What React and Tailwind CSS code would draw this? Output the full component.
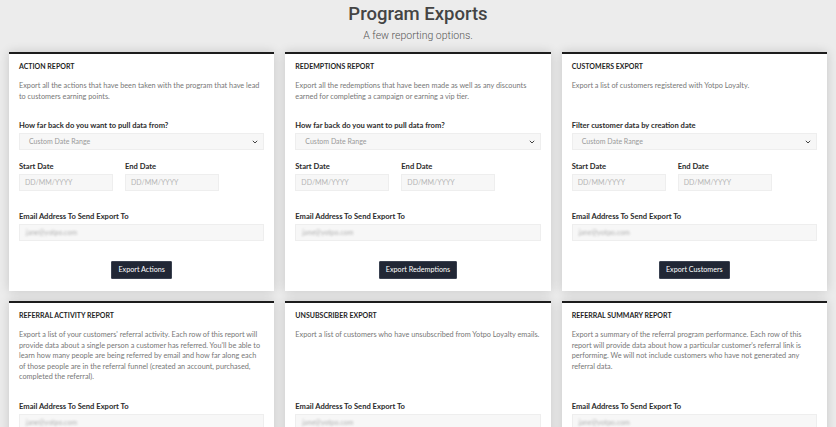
import React from 'react';

const reports = [
  {
    title: 'Action Report',
    desc: 'Export all the actions that have been taken with the program that have lead to customers earning points.',
    filterLabel: 'How far back do you want to pull data from?',
    button: 'Export Actions',
  },
  {
    title: 'Redemptions Report',
    desc: 'Export all the redemptions that have been made as well as any discounts earned for completing a campaign or earning a vip tier.',
    filterLabel: 'How far back do you want to pull data from?',
    button: 'Export Redemptions',
  },
  {
    title: 'Customers Export',
    desc: 'Export a list of customers registered with Yotpo Loyalty.',
    filterLabel: 'Filter customer data by creation date',
    button: 'Export Customers',
  },
  {
    title: 'Referral Activity Report',
    desc: "Export a list of your customers' referral activity. Each row of this report will provide data about a single person a customer has referred. You'll be able to learn how many people are being referred by email and how far along each of those people are in the referral funnel (created an account, purchased, completed the referral).",
    button: 'Export Referrals',
  },
  {
    title: 'Unsubscriber Export',
    desc: 'Export a list of customers who have unsubscribed from Yotpo Loyalty emails.',
    button: 'Export Unsubscribers',
  },
  {
    title: 'Referral Summary Report',
    desc: "Export a summary of the referral program performance. Each row of this report will provide data about how a particular customer's referral link is performing. We will not include customers who have not generated any referral data.",
    button: 'Export Summary',
  },
];

function Label({ children, className = '' }) {
  return (
    <div className={`text-[7.6px] leading-[10px] font-bold text-[#2b2b2b] ${className}`}>{children}</div>
  );
}

function ReportCard({ report }) {
  return (
    <div className="flex flex-col bg-white border-t-2 border-[#1c1c1c] shadow-[0_0_10px_rgba(0,0,0,0.16)] px-[10px] pt-[7px] pb-[12px]">
      <div className="text-[7px] leading-[10px] font-bold uppercase text-[#1f1f1f]">{report.title}</div>
      <p className="flex-1 mt-[10px] mb-[18px] text-[7.3px] leading-[10.5px] text-[#777]">{report.desc}</p>

      {report.filterLabel && (
        <>
          <Label>{report.filterLabel}</Label>
          <div className="mt-[3px] h-[17px] flex items-center justify-between bg-[#f7f7f7] border border-[#eeeeee] pl-[9px] pr-[5px] text-[7px] text-[#999]">
            <span>Custom Date Range</span>
            <svg width="6" height="4" viewBox="0 0 6 4" fill="none">
              <path d="M0.8 0.8 L3 3 L5.2 0.8" stroke="#444" strokeWidth="1" />
            </svg>
          </div>
          <div className="mt-[11px] flex gap-[12px]">
            {['Start Date', 'End Date'].map((l) => (
              <div key={l} className="w-[94px]">
                <Label>{l}</Label>
                <div className="mt-[3px] h-[17px] flex items-center bg-[#f7f7f7] border border-[#eeeeee] pl-[5px] text-[7px] text-[#b5b5b5]">
                  DD/MM/YYYY
                </div>
              </div>
            ))}
          </div>
        </>
      )}

      <Label className={report.filterLabel ? 'mt-[20px]' : ''}>Email Address To Send Export To</Label>
      <div className="mt-[3px] h-[17px] flex items-center bg-[#f7f7f7] border border-[#eeeeee] pl-[6px]">
        <span className="text-[7px] text-[#b0b0b0] blur-[1.2px]">jane@yotpo.com</span>
      </div>

      <div className="mt-[20px] flex justify-center">
        <button className="h-[18px] px-[6px] bg-[#212735] border border-[#3a4150] rounded-[1px] text-[7.2px] text-white">
          {report.button}
        </button>
      </div>
    </div>
  );
}

export default function App() {
  return (
    <div className="min-h-screen bg-[#ececec] font-['Lato',sans-serif]">
      <div className="pt-[3px] text-center">
        <h1 className="font-['Roboto',sans-serif] font-medium text-[18.5px] leading-[22px] text-[#444]">Program Exports</h1>
        <p className="mt-[5px] font-['Roboto',sans-serif] font-light text-[10.5px] leading-[12px] text-[#555]">A few reporting options.</p>
      </div>
      <div className="mt-[10px] grid grid-cols-3 gap-x-[11px] gap-y-[10px] px-[9px] pb-6">
        {reports.map((r) => (
          <ReportCard key={r.title} report={r} />
        ))}
      </div>
    </div>
  );
}
